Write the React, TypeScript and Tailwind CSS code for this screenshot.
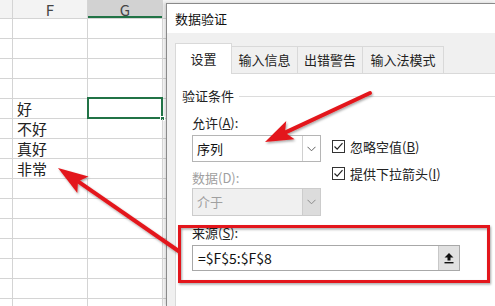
import React from "react";

const cjk = { fontFamily: '"Noto Sans CJK SC", "Noto Sans", sans-serif' };

const rowsData: Record<number, string> = { 4: "好", 5: "不好", 6: "真好", 7: "非常" };

const Chevron = ({ color = "#606060" }: { color?: string }) => (
  <svg width="9" height="6" viewBox="0 0 9 6">
    <path d="M0.5 0.8 L4.5 4.8 L8.5 0.8" fill="none" stroke={color} strokeWidth="1" />
  </svg>
);

const Check = () => (
  <div className="w-[13px] h-[13px] border border-[#333] bg-white flex items-center justify-center">
    <svg width="11" height="11" viewBox="0 0 11 11">
      <path d="M1.5 5.5 L4.2 8.2 L9.5 2.2" fill="none" stroke="#222" strokeWidth="1.2" />
    </svg>
  </div>
);

const Sheet = () => (
  <div className="w-[166px] h-full flex flex-col bg-white overflow-hidden">
    <div className="flex h-[19px] shrink-0 bg-[#f3f3f3] border-b border-[#d4d4d4] text-[15px] leading-none text-[#444]">
      <div className="w-[13px] border-r border-[#d4d4d4]" />
      <div className="w-[75px] border-r border-[#d4d4d4] flex items-center justify-center">F</div>
      <div className="w-[75px] border-r border-[#d4d4d4] bg-[#d2d2d2] shadow-[inset_0_-2px_0_#217346] flex items-center justify-center">G</div>
    </div>
    {Array.from({ length: 15 }).map((_, i) => (
      <div key={i} className="flex h-[20px] shrink-0 border-b border-[#d4d4d4]">
        <div className="w-[13px] border-r border-[#d4d4d4]" />
        <div className="w-[75px] border-r border-[#d4d4d4] pl-[4px] flex items-center text-[15px] text-[#222] leading-none">
          {rowsData[i] ?? ""}
        </div>
        <div className="w-[75px] border-r border-[#d4d4d4] relative">
          {i === 4 && (
            <>
              <div className="absolute -left-px -top-[2px] -right-px -bottom-px border-2 border-[#217346]" />
              <div className="absolute -right-[3px] -bottom-[3px] w-[5px] h-[5px] bg-[#217346] border border-white" />
            </>
          )}
        </div>
      </div>
    ))}
  </div>
);

const Tab = ({ label, active, w }: { label: string; active?: boolean; w: string }) => (
  <div
    className={
      active
        ? `${w} h-[31px] bg-white border border-[#d9d9d9] border-b-0 -mb-px relative z-10 flex items-center justify-center text-[13px] text-[#222]`
        : `${w} h-[27px] bg-[#f0f0f0] border-t border-r border-[#d9d9d9] flex items-center justify-center text-[13px] text-[#222]`
    }
  >
    {label}
  </div>
);

export default function App() {
  return (
    <div className="relative w-[495px] h-[306px] overflow-hidden flex bg-white" style={cjk}>
      <Sheet />
      <div className="flex-1 flex flex-col">
        <div className="h-[3px] bg-[#f3f3f3] shrink-0" />
        <div className="flex-1 flex flex-col border-l border-t border-[#8a8a8a] shadow-[-2px_0_3px_rgba(0,0,0,0.15)]">
          <div className="h-[29px] bg-white flex items-center pl-[8px] text-[13px] text-[#111]">数据验证</div>
          <div className="flex-1 bg-[#f0f0f0] pl-[8px] pt-[10px] flex flex-col">
            <div className="flex items-end">
              <Tab label="设置" active w="w-[57px]" />
              <Tab label="输入信息" w="w-[66px]" />
              <Tab label="出错警告" w="w-[65px]" />
              <Tab label="输入法模式" w="w-[81px]" />
            </div>
            <div className="flex-1 bg-white border border-[#d9d9d9] border-r-0 border-b-0 flex flex-col">
              <div className="flex items-center h-[18px] mt-[13px] pl-[6px] text-[13px] text-[#222]">
                <span>验证条件</span>
                <div className="flex-1 h-px bg-[#dcdcdc] ml-[5px]" />
              </div>
              <div className="pl-[16px] flex flex-col">
                <div className="h-[18px] mt-[9px] flex items-center text-[13px] text-[#222]">
                  允许(<span className="underline">A</span>):
                </div>
                <div className="flex items-start h-[27px] mt-[3px]">
                  <div className="w-[129px] h-[27px] shrink-0 border border-[#b5b5b5] bg-white flex">
                    <div className="flex-1 flex items-center pl-[4px] text-[13px] text-[#111]">序列</div>
                    <div className="w-[18px] border-l border-[#d0d0d0] flex items-center justify-center">
                      <Chevron />
                    </div>
                  </div>
                  <div className="ml-[11px] pt-[5px] flex flex-col gap-[14px] text-[13px] leading-none text-[#222]">
                    <div className="flex items-center h-[13px] gap-[5px]">
                      <Check />
                      <span>忽略空值(<span className="underline">B</span>)</span>
                    </div>
                    <div className="flex items-center h-[13px] gap-[5px]">
                      <Check />
                      <span>提供下拉箭头(<span className="underline">I</span>)</span>
                    </div>
                  </div>
                </div>
                <div className="h-[18px] mt-[7px] flex items-center text-[13px] text-[#a0a0a0]">数据(D):</div>
                <div className="mt-[1px] w-[129px] h-[28px] border border-[#cccccc] bg-[#f0f0f0] flex">
                  <div className="flex-1 flex items-center pl-[4px] text-[13px] text-[#a0a0a0]">介于</div>
                  <div className="w-[18px] bg-[#dcdcdc] border-l border-[#cccccc] flex items-center justify-center">
                    <Chevron color="#8a8a8a" />
                  </div>
                </div>
                <div className="h-[18px] mt-[8px] flex items-center text-[13px] text-[#222]">
                  来源(<span className="underline">S</span>):
                </div>
                <div className="mt-[3px] w-[268px] h-[26px] border border-[#a8a8a8] bg-white flex">
                  <div className="flex-1 flex items-center pl-[5px] text-[14px] text-[#111]">=$F$5:$F$8</div>
                  <div className="w-[21px] bg-[#e1e1e1] border-l border-[#c8c8c8] flex items-center justify-center">
                    <svg width="10" height="12" viewBox="0 0 10 12">
                      <path d="M5 1 L9.5 5.5 L6.5 5.5 L6.5 8.5 L3.5 8.5 L3.5 5.5 L0.5 5.5 Z" fill="#111" />
                      <rect x="0.5" y="10" width="9" height="1.4" fill="#111" />
                    </svg>
                  </div>
                </div>
              </div>
            </div>
          </div>
        </div>
      </div>

      {/* annotations */}
      <svg className="absolute inset-0 pointer-events-none" width="495" height="306" viewBox="0 0 495 306">
        <defs>
          <filter id="sh" x="-10%" y="-10%" width="120%" height="130%">
            <feDropShadow dx="1" dy="1.5" stdDeviation="1.2" floodColor="#000" floodOpacity="0.35" />
          </filter>
        </defs>
        <g filter="url(#sh)" fill="#e3191c" stroke="#e3191c">
          <rect x="179.5" y="226.5" width="309" height="55" fill="none" strokeWidth="3" />
          <line x1="370" y1="93" x2="285" y2="132.6" strokeWidth="4" strokeLinecap="round" />
          <polygon points="265,142 294.6,139.3 285,132.6 286.2,121.1" stroke="none" />
          <line x1="180" y1="252" x2="78" y2="181.4" strokeWidth="4" />
          <polygon points="58,168 88.5,176.4 78,181.4 77.3,193" stroke="none" />
        </g>
      </svg>
    </div>
  );
}
